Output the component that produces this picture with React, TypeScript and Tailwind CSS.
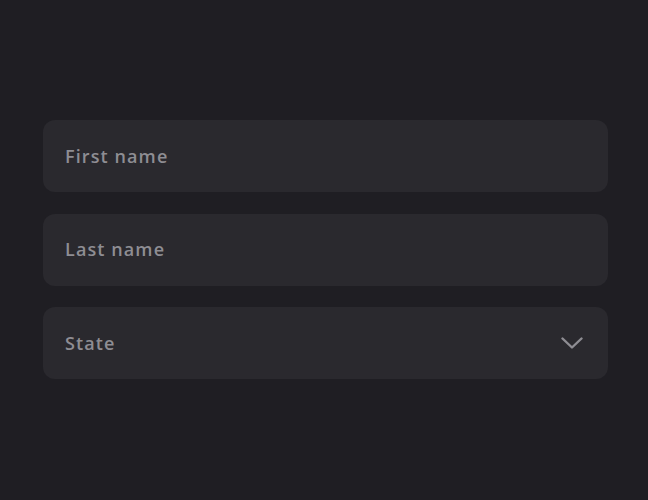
import React from "react";

function Field({ label, select }: { label: string; select?: boolean }) {
  return (
    <div className="flex h-[72px] items-center justify-between rounded-[12px] bg-[#2a292e] pl-[22px] pr-[25px]">
      <span className="text-[18px] font-semibold tracking-[1.1px] text-[#8e8d93]">{label}</span>
      {select && (
        <svg width="22" height="14" viewBox="0 0 22 14" fill="none">
          <path d="M1.5 2.5l9.5 9 9.5-9" stroke="#8e8d93" strokeWidth="2.4" strokeLinecap="round" strokeLinejoin="round" />
        </svg>
      )}
    </div>
  );
}

export default function App() {
  return (
    <div className="h-[500px] w-[648px] bg-[#1f1e23] pl-[43px] pr-[40px] pt-[120px]" style={{ fontFamily: "'Open Sans', 'Noto Sans', sans-serif" }}>
      <div className="flex flex-col gap-[21.5px]">
        <Field label="First name" />
        <Field label="Last name" />
        <Field label="State" select />
      </div>
    </div>
  );
}
